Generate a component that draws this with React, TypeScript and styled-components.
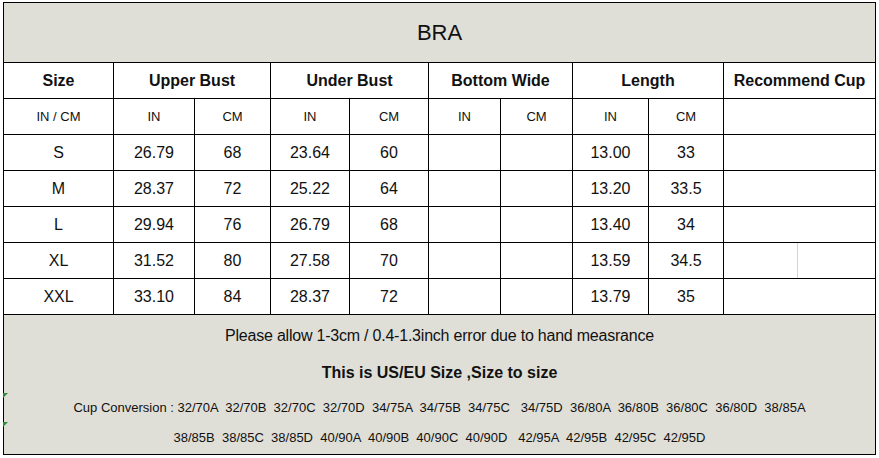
import React from 'react';
import styled, { createGlobalStyle } from 'styled-components';

const GlobalStyle = createGlobalStyle`
  html, body { margin: 0; padding: 0; background: #ffffff; }
  body {
    padding: 2px 0 0 3px;
    font-family: "Liberation Sans", Arial, sans-serif;
    color: #111;
  }
`;

const Sheet = styled.div`
  display: grid;
  grid-template-columns: 109px 80px 75px 78px 78px 71px 71px 75px 74px 151px;
  grid-template-rows: 59px 35px 35px repeat(5, 35px) 139px;
  gap: 1px;
  background: #000;
  border: 1px solid #000;
  width: max-content;
`;

const Cell = styled.div<{ $span?: number; $bold?: boolean; $size?: number }>`
  grid-column: span ${(p) => p.$span ?? 1};
  display: flex;
  align-items: center;
  justify-content: center;
  background: #ffffff;
  font-size: ${(p) => p.$size ?? 16}px;
  font-weight: ${(p) => (p.$bold ? 700 : 400)};
  white-space: nowrap;
  position: relative;
`;

const Title = styled.div`
  grid-column: 1 / -1;
  display: flex;
  align-items: center;
  justify-content: center;
  background: #dfdfd8;
  font-size: 22px;
`;

const SplitCell = styled.div`
  background: #ffffff;
  display: flex;
`;

const FaintPart = styled.div`
  width: 73px;
  border-right: 1px solid #d4d4d4;
`;

const Footer = styled.div`
  grid-column: 1 / -1;
  background: #dfdfd8;
  display: flex;
  flex-direction: column;
  align-items: center;
  position: relative;
`;

const Line = styled.div<{ $h: number; $size: number; $bold?: boolean; $tight?: boolean }>`
  height: ${(p) => p.$h}px;
  line-height: ${(p) => p.$h}px;
  font-size: ${(p) => p.$size}px;
  font-weight: ${(p) => (p.$bold ? 700 : 400)};
  letter-spacing: ${(p) => (p.$tight ? '-0.22px' : 'normal')};
  white-space: pre;
`;

const Marker = styled.span<{ $top: number }>`
  position: absolute;
  left: -1px;
  top: ${(p) => p.$top}px;
  width: 0;
  height: 0;
  border-top: 5px solid #2e8b3a;
  border-right: 5px solid transparent;
`;

const rows = [
  ['S', '26.79', '68', '23.64', '60', '', '', '13.00', '33'],
  ['M', '28.37', '72', '25.22', '64', '', '', '13.20', '33.5'],
  ['L', '29.94', '76', '26.79', '68', '', '', '13.40', '34'],
  ['XL', '31.52', '80', '27.58', '70', '', '', '13.59', '34.5'],
  ['XXL', '33.10', '84', '28.37', '72', '', '', '13.79', '35'],
];

export default function App() {
  return (
    <>
      <GlobalStyle />
      <Sheet>
        <Title>BRA</Title>
        <Cell $bold>Size</Cell>
        <Cell $bold $span={2}>Upper Bust</Cell>
        <Cell $bold $span={2}>Under Bust</Cell>
        <Cell $bold $span={2}>Bottom Wide</Cell>
        <Cell $bold $span={2}>Length</Cell>
        <Cell $bold>Recommend Cup</Cell>
        <Cell $size={13}>IN / CM</Cell>
        {['IN', 'CM', 'IN', 'CM', 'IN', 'CM', 'IN', 'CM'].map((t, i) => (
          <Cell key={i} $size={13}>{t}</Cell>
        ))}
        <Cell />
        {rows.map((r, ri) => (
          <React.Fragment key={ri}>
            {r.map((v, ci) => (
              <Cell key={ci}>{v}</Cell>
            ))}
            {r[0] === 'XL' ? (
              <SplitCell>
                <FaintPart />
              </SplitCell>
            ) : (
              <Cell />
            )}
          </React.Fragment>
        ))}
        <Footer>
          <Marker $top={78} />
          <Marker $top={107} />
          <Line $h={41} $size={16} $tight>Please allow 1-3cm / 0.4-1.3inch error due to hand measrance</Line>
          <Line $h={34} $size={16} $bold>This is US/EU Size ,Size to size</Line>
          <Line $h={36} $size={13}>
            {'Cup Conversion : 32/70A  32/70B  32/70C  32/70D  34/75A  34/75B  34/75C   34/75D  36/80A  36/80B  36/80C  36/80D  38/85A'}
          </Line>
          <Line $h={24} $size={13}>
            {'38/85B  38/85C  38/85D  40/90A  40/90B  40/90C  40/90D   42/95A  42/95B  42/95C  42/95D'}
          </Line>
        </Footer>
      </Sheet>
    </>
  );
}
